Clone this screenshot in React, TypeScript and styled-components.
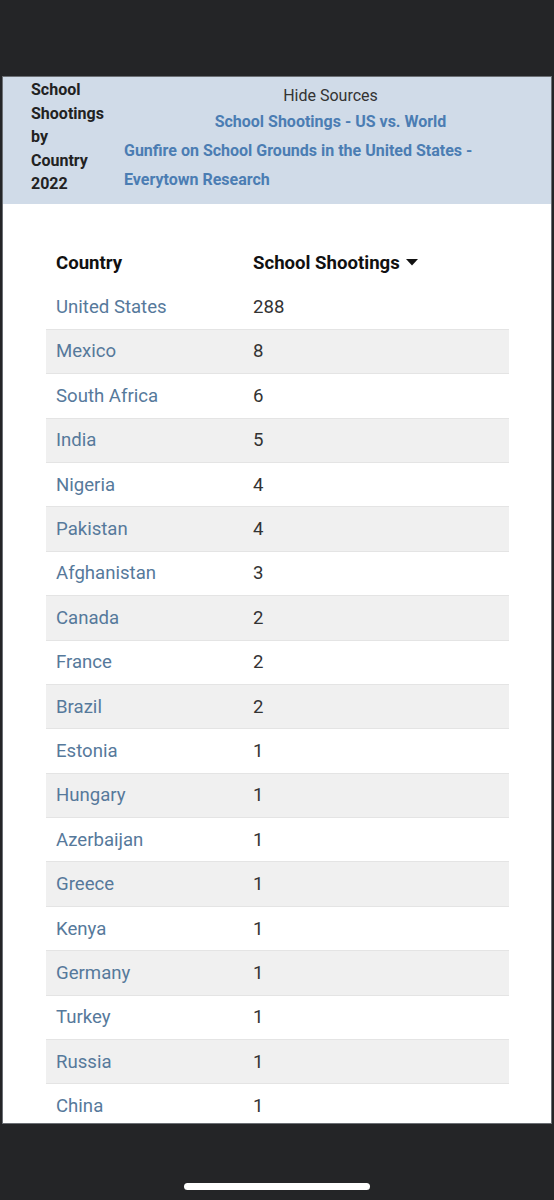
import React from "react";
import styled, { createGlobalStyle } from "styled-components";

const Global = createGlobalStyle`
  html, body { margin: 0; padding: 0; background: #242527; }
  body { font-family: Roboto, "Liberation Sans", Arial, sans-serif; }
`;

const Screen = styled.div`
  width: 554px;
  height: 1200px;
  background: #242527;
  display: flex;
  flex-direction: column;
  align-items: center;
  overflow: hidden;
`;

const Panel = styled.div`
  margin-top: 76px;
  width: 550px;
  height: 1048px;
  flex-shrink: 0;
  box-sizing: border-box;
  border: 1px solid #6b6f74;
  background: #ffffff;
  overflow: hidden;
  display: flex;
  flex-direction: column;
`;

const Header = styled.div`
  background: #d0dbe8;
  height: 127px;
  flex-shrink: 0;
  box-sizing: border-box;
  padding: 1px 14px 0 28px;
  display: flex;
  gap: 18px;
`;

const Title = styled.div`
  width: 75px;
  font-size: 16px;
  font-weight: 700;
  line-height: 23.6px;
  color: #222;
`;

const Sources = styled.div`
  flex: 1;
  display: flex;
  flex-direction: column;
  padding-top: 7px;
`;

const HideLabel = styled.div`
  text-align: center;
  font-size: 16px;
  color: #333;
  line-height: 22px;
`;

const SourceLink = styled.a<{ $center?: boolean }>`
  display: block;
  text-align: ${(p) => (p.$center ? "center" : "left")};
  max-width: ${(p) => (p.$center ? "none" : "360px")};
  font-size: 16px;
  font-weight: 700;
  color: #4b7db3;
  text-decoration: none;
  line-height: 29px;
`;

const Table = styled.div`
  margin: 37px 0 0 43px;
  width: 463px;
  display: flex;
  flex-direction: column;
`;

const Row = styled.div<{ $alt?: boolean; $head?: boolean }>`
  height: 44.4px;
  flex: 0 0 44.4px;
  box-sizing: border-box;
  display: grid;
  grid-template-columns: 197px 1fr;
  align-items: center;
  padding-left: 10px;
  background: ${(p) => (p.$alt ? "#f0f0f0" : "#ffffff")};
  border-bottom: ${(p) => (p.$head ? "none" : "1px solid #e4e4e4")};
  font-size: 18.6px;
`;

const HeadCell = styled.div`
  font-weight: 700;
  color: #111;
  display: flex;
  align-items: center;
  gap: 6px;
`;

const CountryCell = styled.div`
  color: #56799b;
`;

const NumCell = styled.div`
  color: #333;
`;

const Caret = styled.svg`
  width: 12px;
  height: 7px;
  margin-top: -2px;
`;

const HomeBar = styled.div`
  margin-top: 59px;
  width: 186px;
  height: 7px;
  flex-shrink: 0;
  border-radius: 4px;
  background: #ffffff;
`;

const data: [string, number][] = [
  ["United States", 288],
  ["Mexico", 8],
  ["South Africa", 6],
  ["India", 5],
  ["Nigeria", 4],
  ["Pakistan", 4],
  ["Afghanistan", 3],
  ["Canada", 2],
  ["France", 2],
  ["Brazil", 2],
  ["Estonia", 1],
  ["Hungary", 1],
  ["Azerbaijan", 1],
  ["Greece", 1],
  ["Kenya", 1],
  ["Germany", 1],
  ["Turkey", 1],
  ["Russia", 1],
  ["China", 1],
];

export default function App() {
  return (
    <Screen>
      <Global />
      <Panel>
        <Header>
          <Title>School Shootings by Country 2022</Title>
          <Sources>
            <HideLabel>Hide Sources</HideLabel>
            <SourceLink $center>School Shootings - US vs. World</SourceLink>
            <SourceLink>Gunfire on School Grounds in the United States - Everytown Research</SourceLink>
          </Sources>
        </Header>
        <Table>
          <Row $head>
            <HeadCell>Country</HeadCell>
            <HeadCell>
              School Shootings
              <Caret viewBox="0 0 12 7">
                <path d="M0 0 L12 0 L6 6.5 Z" fill="#111" />
              </Caret>
            </HeadCell>
          </Row>
          {data.map(([c, n], i) => (
            <Row key={c} $alt={i % 2 === 1}>
              <CountryCell>{c}</CountryCell>
              <NumCell>{n}</NumCell>
            </Row>
          ))}
        </Table>
      </Panel>
      <HomeBar />
    </Screen>
  );
}
